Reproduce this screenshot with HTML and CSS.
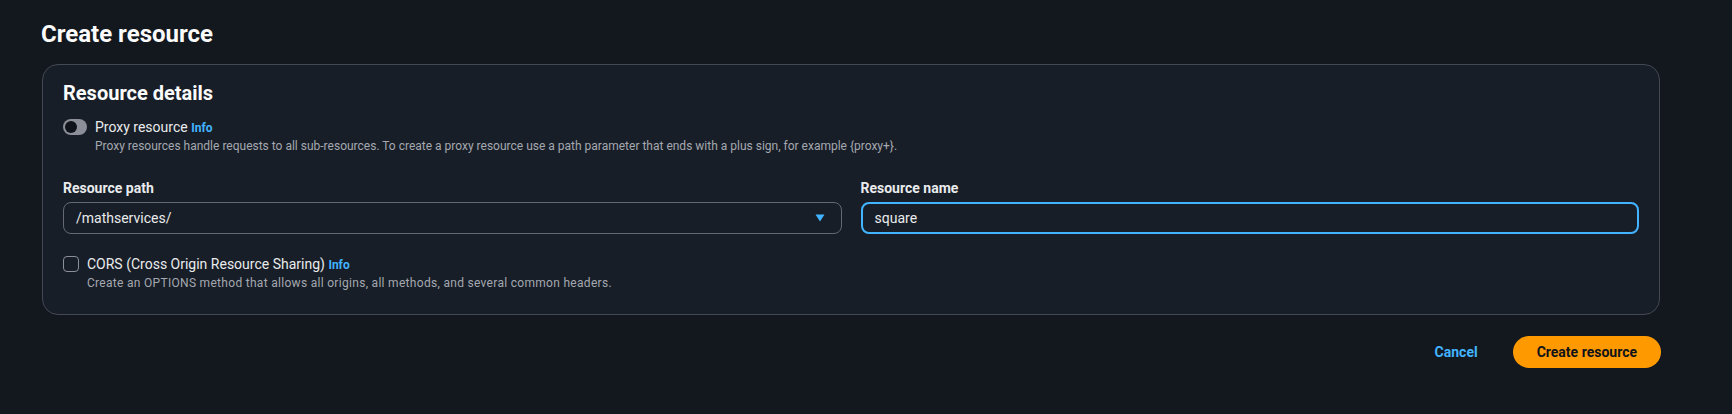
FILE: index.html
```html
<!DOCTYPE html>
<html lang="en">
<head>
<meta charset="utf-8">
<title>Create resource</title>
<link rel="stylesheet" href="styles.css">
</head>
<body>
<main class="page">
  <h1 class="page-title">Create resource</h1>
  <section class="panel">
    <h2 class="panel-title">Resource details</h2>
    <div class="option">
      <span class="toggle"><span class="toggle-knob"></span></span>
      <div class="option-text">
        <div class="option-label">Proxy resource <a class="info">Info</a></div>
        <div class="option-desc">Proxy resources handle requests to all sub-resources. To create a proxy resource use a path parameter that ends with a plus sign, for example {proxy+}.</div>
      </div>
    </div>
    <div class="fields">
      <div class="field">
        <label class="field-label">Resource path</label>
        <div class="select">
          <span class="select-value">/mathservices/</span>
          <svg class="caret" width="10" height="8" viewBox="0 0 10 8"><path d="M0.5 0.5 H9.5 L5 7.5 Z" fill="#42b4ff"/></svg>
        </div>
      </div>
      <div class="field">
        <label class="field-label">Resource name</label>
        <div class="input focused">square</div>
      </div>
    </div>
    <div class="option cors">
      <span class="checkbox"></span>
      <div class="option-text">
        <div class="option-label">CORS (Cross Origin Resource Sharing) <a class="info">Info</a></div>
        <div class="option-desc">Create an OPTIONS method that allows all origins, all methods, and several common headers.</div>
      </div>
    </div>
  </section>
  <div class="actions">
    <button class="btn-link">Cancel</button>
    <button class="btn-primary">Create resource</button>
  </div>
</main>
</body>
</html>
```
FILE: styles.css
```css
* { box-sizing: border-box; }
html, body { margin: 0; padding: 0; }
body {
  background: #13181f;
  font-family: Roboto, "Liberation Sans", sans-serif;
  color: #e9ebed;
  width: 1732px;
  height: 414px;
  overflow: hidden;
}
.page {
  padding: 19px 72px 0 41px;
}
.page-title {
  margin: 0 0 15px 0;
  font-size: 24px;
  line-height: 30px;
  font-weight: 700;
  color: #fbfbfb;
}
.panel {
  border: 1px solid #434852;
  border-radius: 16px;
  background: #181e27;
  padding: 16px 20px 23px 20px;
  margin-left: 1px;
}
.panel-title {
  margin: 0 0 12px 0;
  font-size: 20px;
  line-height: 24px;
  font-weight: 700;
  color: #fbfbfb;
}
.option {
  display: flex;
  gap: 8px;
  align-items: flex-start;
}
.toggle {
  margin-top: 2px;
  width: 24px;
  height: 16px;
  border-radius: 8px;
  background: #8c8f97;
  display: flex;
  align-items: center;
  padding-left: 2px;
  flex: none;
}
.toggle-knob {
  width: 12px;
  height: 12px;
  border-radius: 50%;
  background: #0f141a;
}
.option-label {
  font-size: 14px;
  line-height: 20px;
  color: #e9ebed;
}
.info {
  color: #42b4ff;
  font-weight: 700;
  font-size: 12px;
  cursor: pointer;
}
.option-desc {
  font-size: 12px;
  line-height: 16px;
  color: #a4a8b0;
}
.cors .option-desc {
  letter-spacing: 0.3px;
}
.fields {
  display: grid;
  grid-template-columns: 1fr 1fr;
  column-gap: 19px;
  margin-top: 24px;
}
.field-label {
  display: block;
  font-size: 14px;
  line-height: 20px;
  font-weight: 700;
  color: #e9ebed;
  margin-bottom: 4px;
}
.select {
  height: 32px;
  border: 1px solid #656871;
  border-radius: 8px;
  display: flex;
  align-items: center;
  justify-content: space-between;
  padding: 0 16px 0 12px;
  font-size: 14px;
  color: #e9ebed;
}
.caret { display: block; }
.input {
  height: 32px;
  border: 1px solid #656871;
  border-radius: 8px;
  padding: 0 12px;
  display: flex;
  align-items: center;
  font-size: 14px;
  color: #e9ebed;
}
.input.focused {
  border: 2px solid #42b4ff;
}
.cors {
  margin-top: 20px;
}
.checkbox {
  margin-top: 2px;
  width: 16px;
  height: 16px;
  border: 1px solid #8c8f97;
  border-radius: 4px;
  flex: none;
}
.actions {
  display: flex;
  justify-content: flex-end;
  align-items: center;
  gap: 15px;
  margin-top: 21px;
  margin-right: -1px;
}
.btn-link {
  background: none;
  border: none;
  font-family: inherit;
  font-size: 14px;
  font-weight: 700;
  color: #42b4ff;
  padding: 0 20px;
  height: 32px;
}
.btn-primary {
  background: #ff9900;
  border: none;
  border-radius: 16px;
  height: 32px;
  padding: 0 24px;
  font-family: inherit;
  font-size: 14px;
  font-weight: 700;
  color: #0f141a;
}
```
